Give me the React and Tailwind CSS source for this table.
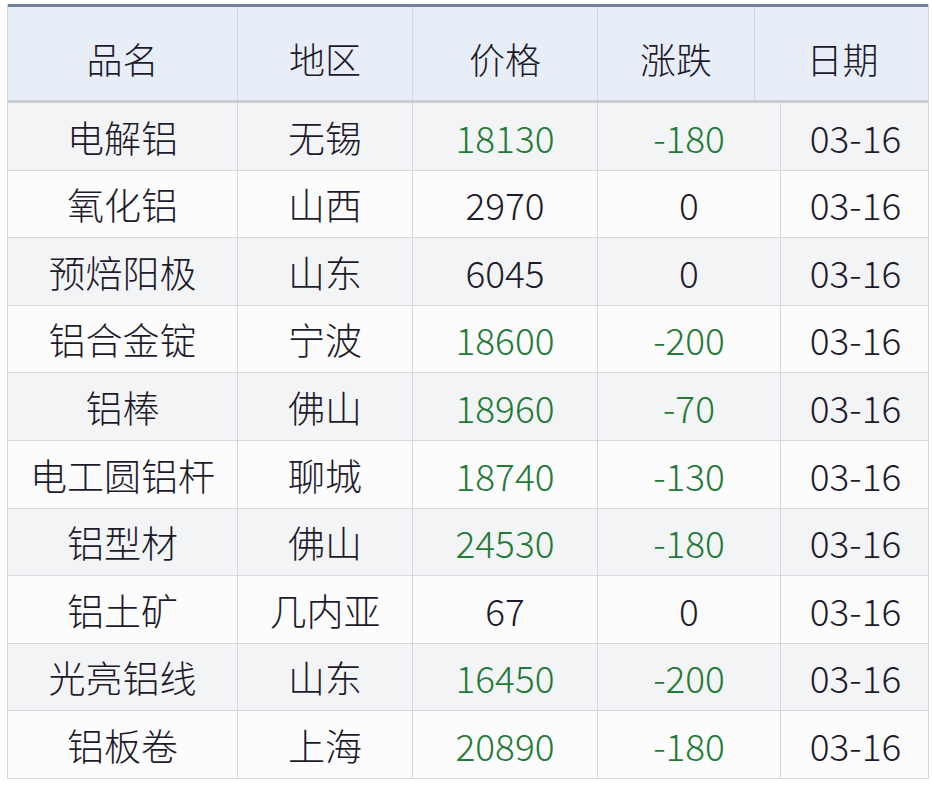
import React from "react";

const rows = [
  ["电解铝", "无锡", "18130", "-180"],
  ["氧化铝", "山西", "2970", "0"],
  ["预焙阳极", "山东", "6045", "0"],
  ["铝合金锭", "宁波", "18600", "-200"],
  ["铝棒", "佛山", "18960", "-70"],
  ["电工圆铝杆", "聊城", "18740", "-130"],
  ["铝型材", "佛山", "24530", "-180"],
  ["铝土矿", "几内亚", "67", "0"],
  ["光亮铝线", "山东", "16450", "-200"],
  ["铝板卷", "上海", "20890", "-180"],
];

const font = { fontFamily: '"Noto Sans CJK SC", "Noto Sans", sans-serif' };

export default function App() {
  return (
    <div className="w-[932px] h-[786px] bg-white pt-[4px] pl-[7px]" style={font}>
      <div className="w-[922px] border-l border-r border-[#d3d6dc]">
        <div className="grid grid-cols-[230px_175px_185px_157px_175px] h-[99px] bg-[#e8eef8] border-t-[3px] border-t-[#72819a] border-b-[3px] border-b-[#c9cdd4] text-[36px] font-light text-[#1d1b2b]">
          {["品名", "地区", "价格", "涨跌", "日期"].map((h, i) => (
            <div
              key={h}
              className={`flex items-center justify-center pt-[8px] ${i < 4 ? "border-r border-[#d3d8e0]" : ""}`}
            >
              {h}
            </div>
          ))}
        </div>
        {rows.map((r, idx) => {
          const green = r[3] !== "0";
          return (
            <div
              key={idx}
              className={`grid grid-cols-[230px_175px_185px_183px_149px] h-[67.6px] border-b border-[#d6d8dd] text-[37px] font-light text-[#1d1b2b] ${idx % 2 === 0 ? "bg-[#f3f4f6]" : "bg-[#fcfcfd]"}`}
            >
              <div className="flex items-center justify-center pt-[2px] border-r border-[#d6d8dd]">{r[0]}</div>
              <div className="flex items-center justify-center pt-[2px] border-r border-[#d6d8dd]">{r[1]}</div>
              <div className={`flex items-center justify-center pt-[2px] border-r border-[#d6d8dd] ${green ? "text-[#227a36]" : ""}`}>{r[2]}</div>
              <div className={`flex items-center justify-center pt-[2px] border-r border-[#d6d8dd] ${green ? "text-[#227a36]" : ""}`}>{r[3]}</div>
              <div className="flex items-center justify-center pt-[2px]">03-16</div>
            </div>
          );
        })}
      </div>
    </div>
  );
}
